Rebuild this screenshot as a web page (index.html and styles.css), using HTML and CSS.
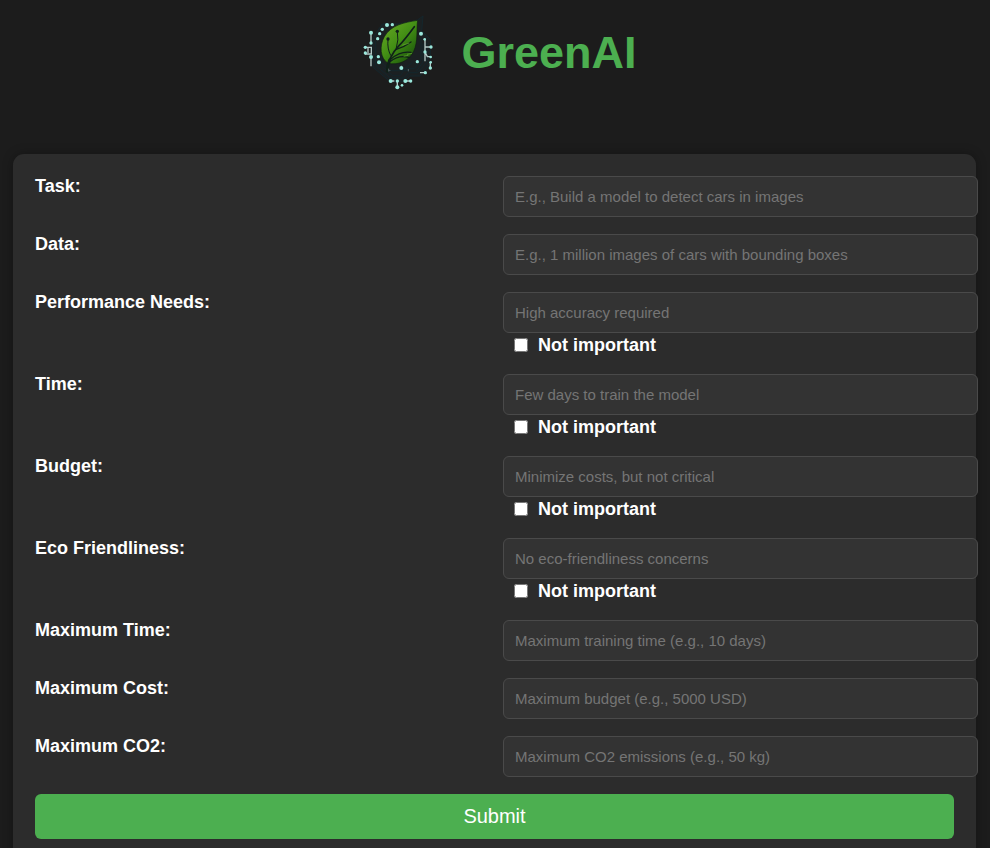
FILE: index.html
```html
<!DOCTYPE html>
<html lang="en">
<head>
<meta charset="utf-8">
<meta name="viewport" content="width=device-width, initial-scale=1">
<title>GreenAI</title>
<link rel="stylesheet" href="styles.css">
</head>
<body>
<header class="header">
  <svg class="logo" viewBox="0 0 270 270" aria-hidden="true">
    <defs>
      <linearGradient id="leaf" x1="0.1" y1="0.1" x2="0.8" y2="0.9">
        <stop offset="0" stop-color="#64a522"/>
        <stop offset="0.5" stop-color="#438f15"/>
        <stop offset="1" stop-color="#1f5a0c"/>
      </linearGradient>
    </defs>
    <g fill="none" stroke="#14262c" stroke-width="3">
      <path d="M188 30 204 18 200 62 226 88V160L196 198H164L150 214H104L54 172V82L82 42H130L188 30" fill="#1b2022"/>
      <path d="M62 92V166L106 204H146L160 188H188L216 156V98"/>
      <path d="M80 100V158L98 174M198 84V148L178 176H150L136 196H112L84 172M204 100V156L184 184"/>
      <path d="M100 184V166M102 182H162M172 158 148 176"/>
    </g>
    <path d="M188 31C184 52 190 96 176 124C162 153 128 168 98 159C76 145 72 108 88 80C108 45 148 37 188 31Z" fill="url(#leaf)" stroke="#101c13" stroke-width="2"/>
    <g fill="none" stroke="#102019" stroke-linecap="round">
      <path d="M97 184C98 150 112 128 132 107Q150 88 178 50" stroke-width="5"/>
      <path d="M97 184Q97 166 104 150" stroke-width="9"/>
      <path d="M107 136Q96 116 99 89M124 114Q132 90 127 64" stroke-width="3"/>
      <path d="M124 118Q146 112 168 96M108 147Q136 122 168 127M105 155Q132 133 164 143" stroke-width="4"/>
    </g>
    <g fill="#102019"><circle cx="99" cy="87" r="5"/><circle cx="127" cy="64" r="5"/></g>
    <path d="M142 106 163 99M146 139 160 136M156 133 171 130" stroke="#69a935" stroke-width="2"/>
    <g fill="none" stroke="#b3c9c7" stroke-width="4">
      <path d="M48 68V99M48 141V169M31 112H49V132H30M39 112V129M210 87V154M210 111H228M210 126 217 140H227M226 156V174M211 188H195M127 213V233M106 213H118M150 213H166"/>
      <path d="M101 184V176M102 184 106 180M160 177V184M139 166V174" stroke="#718183" stroke-width="2"/>
    </g>
    <g fill="#9be8dc">
      <circle cx="48" cy="68" r="6"/><circle cx="48" cy="99" r="5"/><circle cx="31" cy="112" r="5"/><circle cx="31" cy="129" r="5"/><circle cx="48" cy="141" r="6"/>
      <circle cx="68" cy="86" r="5"/><circle cx="74" cy="71" r="5"/><circle cx="82" cy="58" r="5"/><circle cx="96" cy="45" r="6"/><circle cx="112" cy="44" r="5"/>
      <circle cx="70" cy="140" r="5"/><circle cx="72" cy="157" r="6"/><circle cx="198" cy="71" r="6"/><circle cx="209" cy="88" r="4"/><circle cx="228" cy="111" r="5"/><circle cx="210" cy="126" r="5"/>
      <circle cx="227" cy="141" r="4"/><circle cx="227" cy="157" r="4"/><circle cx="226" cy="174" r="5"/><circle cx="211" cy="188" r="5"/><circle cx="187" cy="155" r="5"/><circle cx="139" cy="174" r="6"/>
      <circle cx="107" cy="213" r="6"/><circle cx="127" cy="213" r="5"/><circle cx="151" cy="213" r="6"/><circle cx="167" cy="213" r="5"/><circle cx="127" cy="232" r="6"/><circle cx="141" cy="226" r="4"/>
    </g>
  </svg>
  <h1 class="title">GreenAI</h1>
</header>
<main class="card">
  <form class="form">
    <label class="label" for="task">Task:</label>
    <div class="field"><input class="input" id="task" type="text" placeholder="E.g., Build a model to detect cars in images"></div>

    <label class="label" for="data">Data:</label>
    <div class="field"><input class="input" id="data" type="text" placeholder="E.g., 1 million images of cars with bounding boxes"></div>

    <label class="label" for="performance">Performance Needs:</label>
    <div class="field">
      <input class="input" id="performance" type="text" placeholder="High accuracy required">
      <div class="option"><input class="check" id="performance-skip" type="checkbox"><label class="label" for="performance-skip">Not important</label></div>
    </div>

    <label class="label" for="time">Time:</label>
    <div class="field">
      <input class="input" id="time" type="text" placeholder="Few days to train the model">
      <div class="option"><input class="check" id="time-skip" type="checkbox"><label class="label" for="time-skip">Not important</label></div>
    </div>

    <label class="label" for="budget">Budget:</label>
    <div class="field">
      <input class="input" id="budget" type="text" placeholder="Minimize costs, but not critical">
      <div class="option"><input class="check" id="budget-skip" type="checkbox"><label class="label" for="budget-skip">Not important</label></div>
    </div>

    <label class="label" for="eco">Eco Friendliness:</label>
    <div class="field">
      <input class="input" id="eco" type="text" placeholder="No eco-friendliness concerns">
      <div class="option"><input class="check" id="eco-skip" type="checkbox"><label class="label" for="eco-skip">Not important</label></div>
    </div>

    <label class="label" for="max-time">Maximum Time:</label>
    <div class="field"><input class="input" id="max-time" type="text" placeholder="Maximum training time (e.g., 10 days)"></div>

    <label class="label" for="max-cost">Maximum Cost:</label>
    <div class="field"><input class="input" id="max-cost" type="text" placeholder="Maximum budget (e.g., 5000 USD)"></div>

    <label class="label" for="max-co2">Maximum CO2:</label>
    <div class="field"><input class="input" id="max-co2" type="text" placeholder="Maximum CO2 emissions (e.g., 50 kg)"></div>

    <button class="submit" type="submit">Submit</button>
  </form>
</main>
</body>
</html>
```
FILE: styles.css
```css
body {
  margin: 0;
  background: #1c1c1c;
  color: #fff;
  font-family: "Liberation Sans", Arial, sans-serif;
  overflow: hidden;
}

.header {
  display: flex;
  justify-content: center;
  align-items: center;
  gap: 16px;
  padding: 10px 0 54px 2px;
}

.logo {
  width: 90px;
  height: 90px;
}

.title {
  margin: 0;
  padding-bottom: 4px;
  color: #4caf50;
  font-size: 45px;
  line-height: 52px;
}

.card {
  margin: 0 14px 0 13px;
  padding: 22px;
  border-radius: 11px;
  background: #2c2c2c;
  box-shadow: 0 0 11px rgba(0, 0, 0, 0.3);
}

.form {
  display: grid;
  grid-template-columns: 1fr 1fr;
  gap: 17px;
}

.label {
  font-size: 18px;
  font-weight: bold;
  line-height: 20px;
}

/* The padding and border are added to the full column width. */
.input {
  display: block;
  box-sizing: content-box;
  width: 100%;
  height: 17px;
  margin: 0;
  padding: 11px;
  border: 1px solid #4a4a4a;
  border-radius: 6px;
  background: #333;
  color: #fff;
  font-family: inherit;
  font-size: 15px;
}

.input::placeholder {
  color: #757575;
}

.option {
  display: flex;
  align-items: center;
  gap: 10px;
  height: 24px;
  padding-left: 11px;
}

.check {
  width: 14px;
  height: 14px;
  margin: 0;
}

.submit {
  grid-column: 1 / -1;
  height: 45px;
  padding: 0;
  border: 0;
  border-radius: 6px;
  background: #4caf50;
  color: #fff;
  font-family: inherit;
  font-size: 20px;
}
```
